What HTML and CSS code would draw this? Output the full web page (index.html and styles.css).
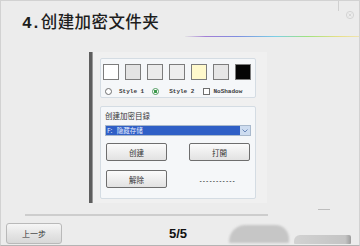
FILE: index.html
```html
<!DOCTYPE html>
<html lang="zh-CN">
<head>
  <meta charset="UTF-8">
  <title>创建加密文件夹</title>
  <link rel="stylesheet" href="styles.css">
</head>
<body>
  <div class="frame">
    <div class="header">
      <h1 class="title"><span class="num">4.</span>创建加密文件夹</h1>
      <div class="rainbow"></div>
      <div class="close">
        <svg width="10" height="10" viewBox="0 0 10 10">
          <circle cx="5" cy="5" r="3.6" fill="none" stroke="#d4d4d4" stroke-width="1"/>
          <path d="M3.6 3.6 L6.4 6.4 M6.4 3.6 L3.6 6.4" stroke="#d4d4d4" stroke-width="0.9"/>
        </svg>
      </div>
    </div>

    <div class="stage">
      <div class="group">
        <div class="swatches">
          <span class="swatch" style="background:#ffffff"></span>
          <span class="swatch" style="background:#e3e3e3"></span>
          <span class="swatch" style="background:#ebebeb"></span>
          <span class="swatch" style="background:#eeeeee"></span>
          <span class="swatch" style="background:#fff9cc"></span>
          <span class="swatch" style="background:#e6e6e6"></span>
          <span class="swatch" style="background:#050505"></span>
        </div>
        <div class="options">
          <span class="radio"></span>
          <span class="opt opt1">Style 1</span>
          <span class="radio checked"></span>
          <span class="opt opt2">Style 2</span>
          <span class="check"></span>
          <span class="opt">NoShadow</span>
        </div>
      </div>

      <div class="group group2">
        <div class="caption">创建加密目録</div>
        <div class="select">
          <div class="selected">F:&nbsp;&nbsp;&nbsp;隐藏存储</div>
          <div class="arrow">
            <svg width="6" height="4" viewBox="0 0 6 4"><path d="M0.5 0.5 L3 3 L5.5 0.5" fill="none" stroke="#6a88b8" stroke-width="1"/></svg>
          </div>
        </div>
        <div class="btn-row">
          <button class="btn">创建</button>
          <button class="btn">打開</button>
        </div>
        <div class="btn-row second">
          <button class="btn">解除</button>
          <span class="dashes">-----------</span>
        </div>
      </div>
    </div>

    <div class="sep-row">
      <div class="sep"></div>
      <div class="tick"></div>
    </div>

    <div class="footer">
      <button class="prev">上一步</button>
      <div class="pager">5/5</div>
      <div class="blob"></div>
      <div class="blob2"></div>
    </div>
  </div>
</body>
</html>
```

FILE: styles.css
```css
body {
  margin: 0;
  background: #ececec;
  font-family: "Noto Sans CJK SC", sans-serif;
}

.frame {
  width: 360px;
  height: 246px;
  box-sizing: border-box;
  border: 1px solid #d2d2d2;
  border-bottom-color: #b4b4b4;
  background: #ececec;
  overflow: hidden;
}

.header {
  position: relative;
  padding-top: 10px;
}

.title {
  margin: 0 0 0 21px;
  font-size: 16.5px;
  line-height: 20px;
  font-weight: 500;
  color: #1e1e1e;
  letter-spacing: 0.4px;
}

.num {
  font-family: "Liberation Mono", monospace;
  font-weight: bold;
  letter-spacing: -1px;
  margin-right: 1px;
}

.rainbow {
  margin: 2px 0 0 184px;
  height: 1px;
  background: linear-gradient(to right, #e4e4e4, #a27ed6 12%, #7f8ee0 30%, #7ccfe6 52%, #9fe27e 70%, #e6df86 88%, #efe4b0);
}

.close {
  position: absolute;
  top: 0;
  right: 4px;
  height: 10px;
  padding-left: 6px;
  border-left: 1px solid #d0d0d0;
}

.stage {
  margin: 15px 0 0 88px;
  width: 178px;
  height: 151px;
  box-sizing: border-box;
  border-left: 3px solid #5e5e5e;
  box-shadow: inset 1px 0 0 #9a9a9a;
  background: #f0f0f0;
  padding: 6px 0 0 8px;
}

.group {
  width: 156px;
  height: 40px;
  box-sizing: border-box;
  border: 1px solid #d4dce3;
  border-radius: 2px;
  background: #f5f7f9;
  padding: 5px 0 0 2px;
}

.swatches {
  display: flex;
  gap: 6px;
}

.swatch {
  width: 16px;
  height: 16px;
  box-sizing: border-box;
  border: 1px solid #7c7c7c;
}

.options {
  display: flex;
  align-items: center;
  margin-top: 7px;
  padding-left: 2px;
  height: 9px;
  font-family: "Liberation Mono", monospace;
  font-size: 6px;
  font-weight: bold;
  color: #3a3a3a;
}

.radio {
  width: 7px;
  height: 7px;
  box-sizing: border-box;
  border: 1px solid #6f6f6f;
  border-radius: 50%;
  background: #fff;
  margin-right: 7px;
}

.radio.checked {
  border-color: #4e9a5e;
  background: radial-gradient(circle, #3c9a4c 0 1.4px, #fff 1.8px);
  margin-right: 10px;
}

.opt1 { margin-right: 8px; }
.opt2 { margin-right: 9px; }

.check {
  width: 7px;
  height: 7px;
  box-sizing: border-box;
  border: 1px solid #6f6f6f;
  background: #fff;
  margin-right: 3px;
}

.group2 {
  height: 93px;
  margin-top: 8px;
  padding: 4px 0 0 4px;
}

.caption {
  font-size: 7.5px;
  line-height: 10px;
  color: #333;
}

.select {
  display: flex;
  width: 146px;
  height: 11px;
  box-sizing: border-box;
  margin-top: 4px;
  border: 1px solid #a9b9cc;
  background: #fff;
}

.selected {
  flex: 1;
  background: #2f5fc6;
  color: #e8eeff;
  font-size: 6.5px;
  line-height: 9px;
  padding-left: 1px;
}

.arrow {
  width: 10px;
  display: flex;
  align-items: center;
  justify-content: center;
  background: #cddcf0;
}

.btn-row {
  display: flex;
  align-items: center;
  gap: 22px;
  margin-top: 7px;
  padding-left: 1px;
}

.btn-row.second {
  margin-top: 9px;
}

.btn {
  width: 61px;
  height: 18px;
  margin: 0;
  padding: 0;
  border: 1px solid #6e6e6e;
  border-radius: 2px;
  background: linear-gradient(#fbfbfb, #ececec 60%, #e2e2e2);
  font-family: "Noto Sans CJK SC", sans-serif;
  font-size: 7.5px;
  color: #333;
}

.dashes {
  margin: 4px 0 0 10px;
  font-family: "Liberation Mono", monospace;
  font-size: 5.5px;
  font-weight: bold;
  color: #2a2a2a;
}

.sep-row {
  display: flex;
  align-items: flex-start;
  margin-top: 6px;
  height: 7px;
}

.sep {
  margin: 5px 0 0 24px;
  width: 243px;
  height: 2px;
  background: #cdcdcd;
}

.tick {
  margin-left: 50px;
  width: 12px;
  height: 1px;
  background: #bdbdbd;
}

.footer {
  display: flex;
  align-items: flex-start;
  margin-top: 7px;
  padding-left: 5px;
}

.prev {
  width: 56px;
  height: 21px;
  margin: 0;
  padding: 0;
  border: 1px solid #b9b9b9;
  border-radius: 3px;
  background: linear-gradient(#f6f6f6, #e4e4e4 55%, #d8d8d8);
  font-family: "Noto Sans CJK SC", sans-serif;
  font-size: 8px;
  color: #333;
}

.pager {
  margin-left: 107px;
  width: 30px;
  font-family: "Liberation Sans", sans-serif;
  font-weight: bold;
  font-size: 13px;
  line-height: 22px;
  color: #111;
}

.blob {
  margin: 2px 0 0 30px;
  width: 60px;
  height: 18px;
  background: #c6c6c6;
  border-radius: 22px 18px 2px 2px;
  filter: blur(1px);
}

.blob2 {
  margin: 12px 0 0 5px;
  width: 57px;
  height: 9px;
  background: linear-gradient(to right, #d2d2d2, #c4c4c4 90%, #9d9d9d);
  border-radius: 6px 2px 1px 1px;
  filter: blur(0.6px);
}
```
